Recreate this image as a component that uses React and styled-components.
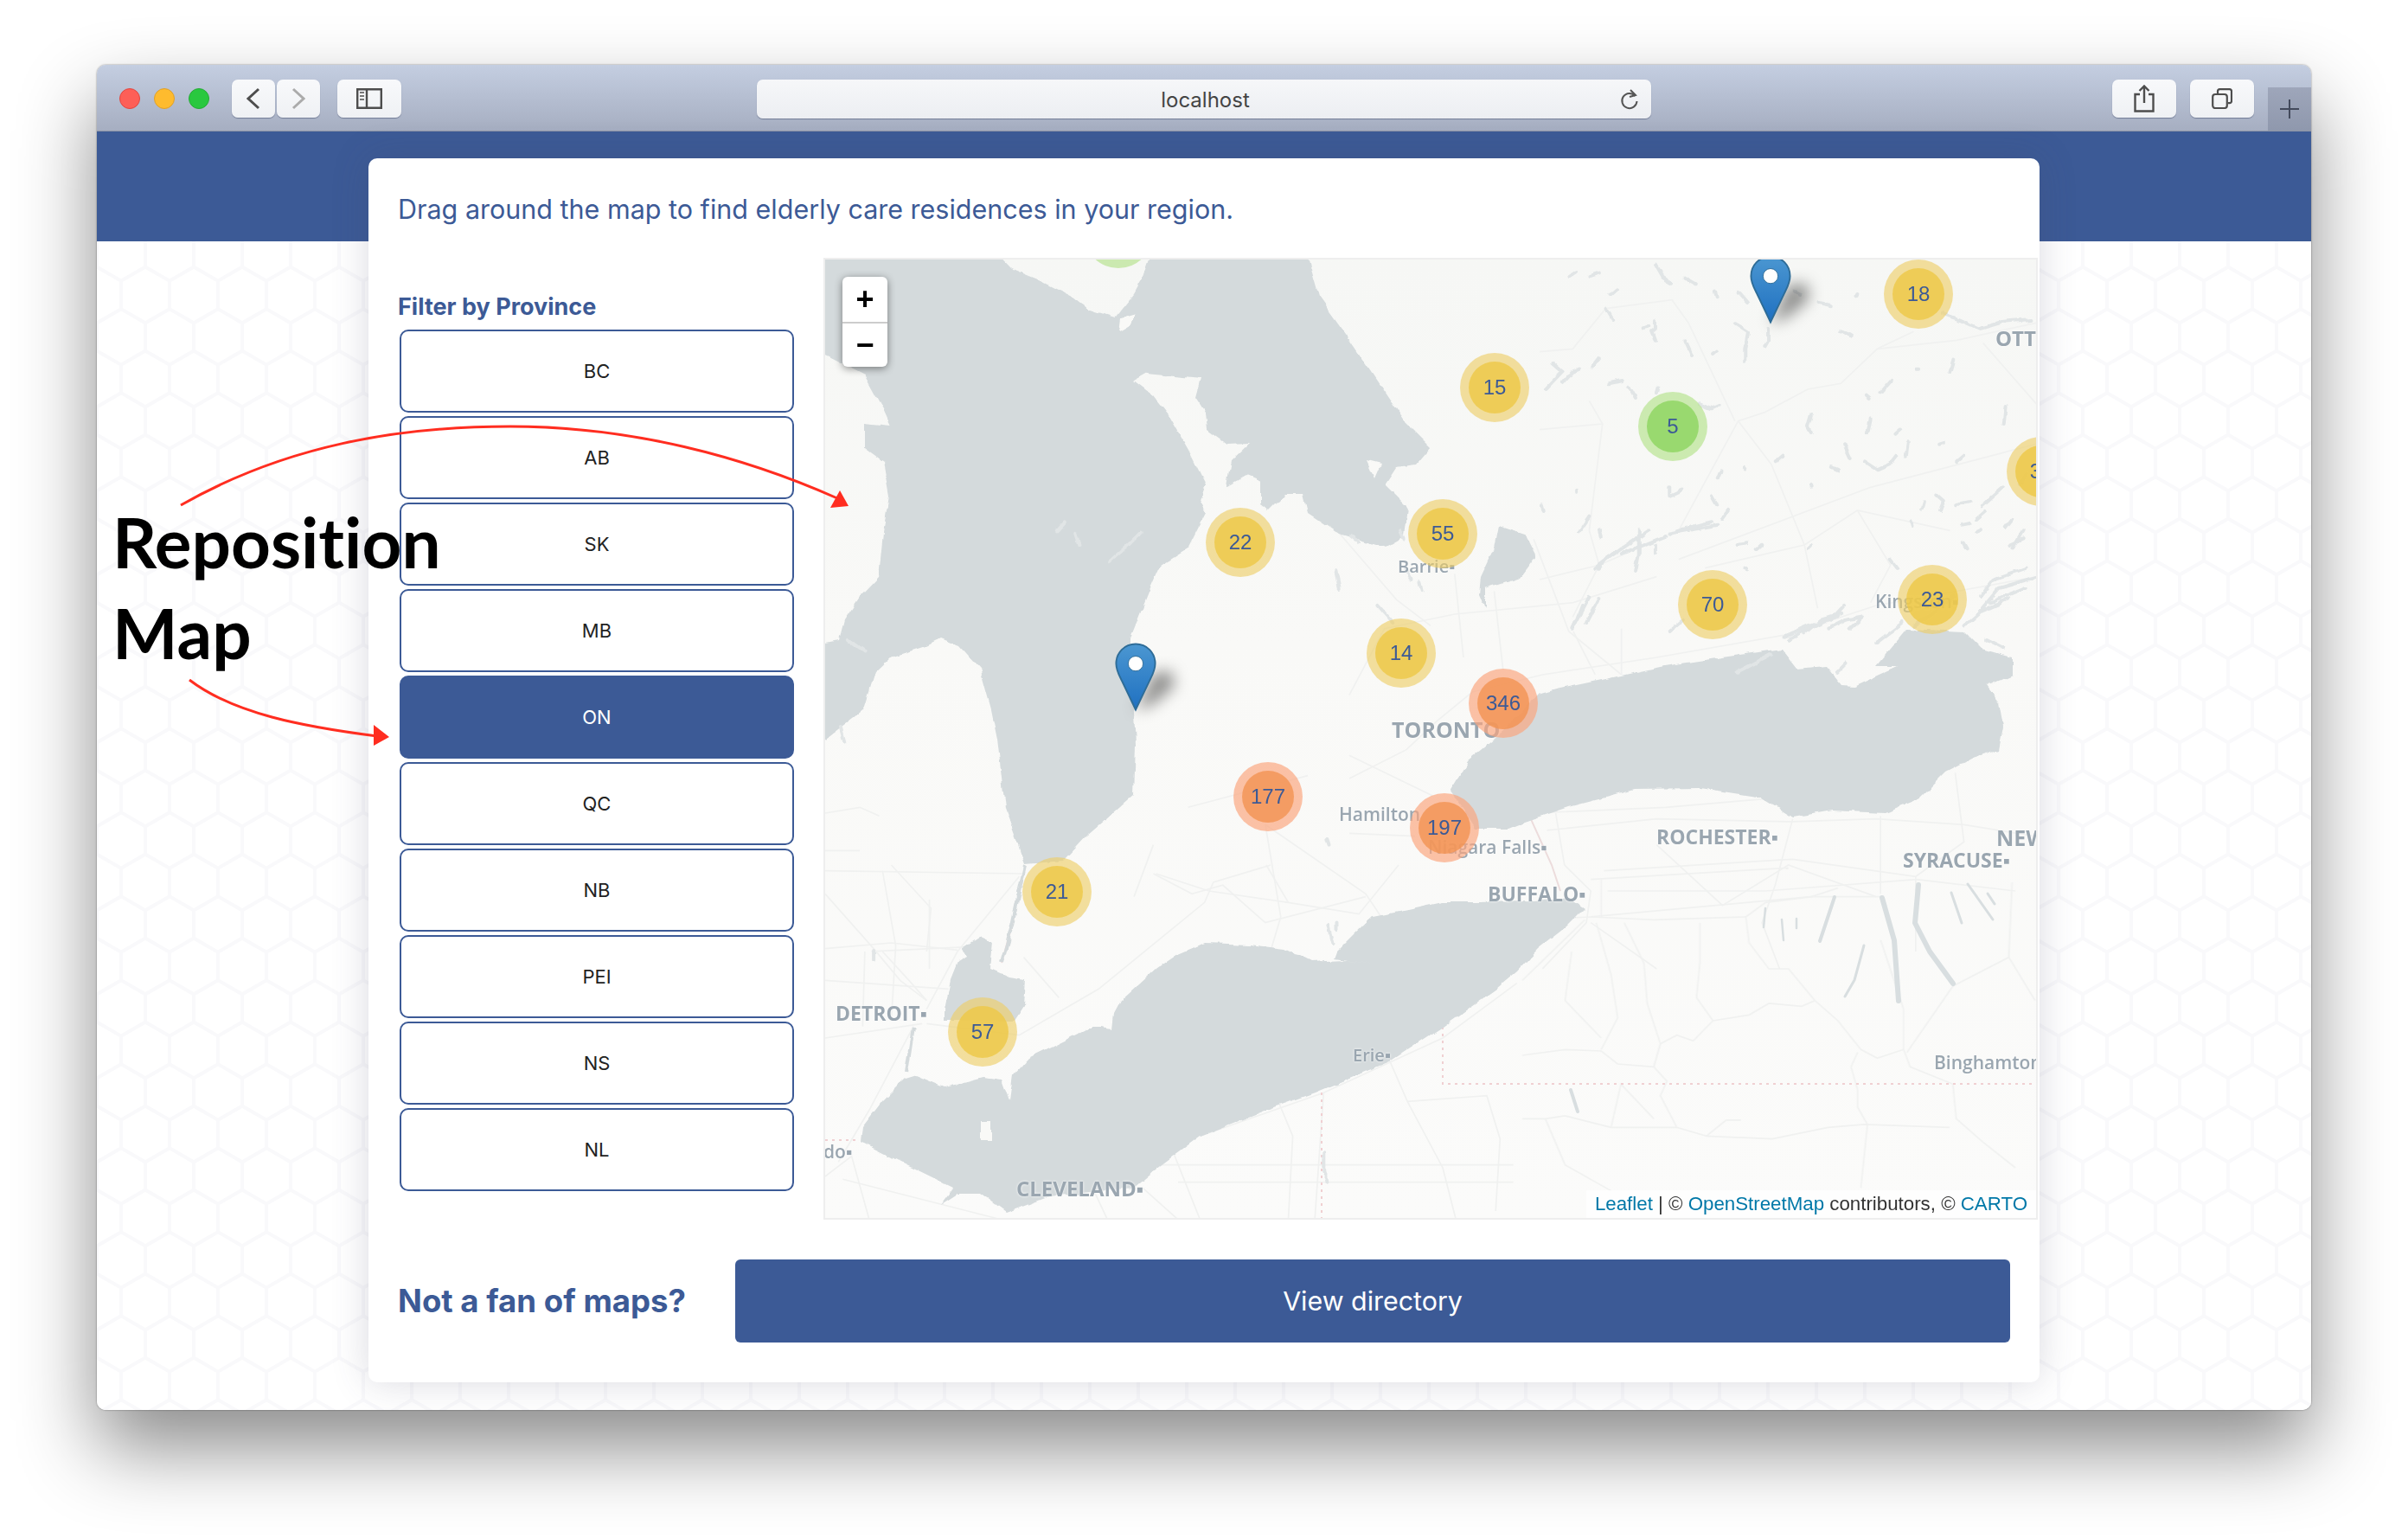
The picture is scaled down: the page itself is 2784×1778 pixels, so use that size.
import React from "react";
import styled, { createGlobalStyle } from "styled-components";

const BLUE = "#3c5a96";
const WATER = "#d4dadc";
const LAND = "#f9f9f7";
const MAP_X = 954;
const MAP_Y = 300;

const hexTile = encodeURIComponent(
  `<svg xmlns="http://www.w3.org/2000/svg" width="56" height="97"><path d="M28 0v16.2L56 32.4v32.2L28 80.8 0 64.6V32.4L28 16.2M28 80.8V97" fill="none" stroke="#f9f9fb" stroke-width="4"/></svg>`
);

const GlobalStyle = createGlobalStyle`
  html, body { margin: 0; background: #fff; }
  * { box-sizing: border-box; }
  body { font-family: Inter, "Liberation Sans", sans-serif; }
`;

const provinces = ["BC", "AB", "SK", "MB", "ON", "QC", "NB", "PEI", "NS", "NL"];

// page coordinates, the map offset is taken off when placing them
const clusters = [
  { n: "", x: 1293, y: 270, kind: "green" },
  { n: "18", x: 2218, y: 340 },
  { n: "15", x: 1728, y: 448 },
  { n: "5", x: 1934, y: 493, kind: "green" },
  { n: "31", x: 2360, y: 545 },
  { n: "22", x: 1434, y: 627 },
  { n: "55", x: 1668, y: 617 },
  { n: "70", x: 1980, y: 699 },
  { n: "23", x: 2234, y: 693 },
  { n: "14", x: 1620, y: 755 },
  { n: "346", x: 1738, y: 813, kind: "orange" },
  { n: "177", x: 1466, y: 921, kind: "orange" },
  { n: "197", x: 1670, y: 957, kind: "orange" },
  { n: "21", x: 1222, y: 1031 },
  { n: "57", x: 1136, y: 1193 },
];

const labels = [
  { t: "TORONTO", x: 1609, y: 828, s: 25, w: 700 },
  { t: "Barrie▪", x: 1616, y: 643, s: 20, w: 600 },
  { t: "Hamilton", x: 1548, y: 929, s: 21, w: 600 },
  { t: "Niagara Falls▪", x: 1651, y: 967, s: 21, w: 600 },
  { t: "BUFFALO▪", x: 1720, y: 1020, s: 23, w: 700 },
  { t: "ROCHESTER▪", x: 1915, y: 954, s: 23, w: 700 },
  { t: "SYRACUSE▪", x: 2200, y: 981, s: 23, w: 700 },
  { t: "NEW", x: 2308, y: 953, s: 25, w: 700 },
  { t: "OTTA", x: 2307, y: 377, s: 24, w: 700 },
  { t: "Kingston▪", x: 2168, y: 683, s: 21, w: 600 },
  { t: "DETROIT▪", x: 966, y: 1158, s: 23, w: 700 },
  { t: "Erie▪", x: 1564, y: 1208, s: 20, w: 600 },
  { t: "CLEVELAND▪", x: 1175, y: 1360, s: 24, w: 700 },
  { t: "Binghamton", x: 2236, y: 1216, s: 21, w: 600 },
  { t: "do▪", x: 952, y: 1319, s: 21, w: 600 },
];

// lakes, in pixels of the map box
const huron =
  "M-20 -20L185 -20 214 10 246 23 286 43 304 57 335 67 357 40 368 20 382 -20 553 -20 571 43 607 93 634 133 670 187 700 217 683 237 660 240 647 260 674 287 670 320 647 333 594 317 558 293 553 272 531 272 513 290 504 283 504 257 487 250 464 263 469 233 491 212 464 213 442 197 440 177 429 160 435 138 371 132 357 140 379 157 397 180 420 220 440 260 433 280 440 293 420 333 388 353 379 373 353 437 353 452 359 561 357 619 303 666 276 695 231 699 208 634 199 554 192 520 179 473 156 447 134 438 116 447 76 460 58 477 45 520 -20 570 -20 447 16 440 22 417 40 390 62 367 67 317 74 273 67 233 45 217 45 190 76 193 67 173 45 133 -20 100Z";
const erie =
  "M750 743L714 743 673 752 633 760 612 780 592 800 589 808 656 818 602 810 561 812 531 797 490 792 439 790 408 803 383 820 342 857 334 872 332 890 319 888 306 888 276 903 235 923 217 943 213 973 204 948 184 945 138 957 105 943 92 947 66 973 43 1003 41 1020 87 1043 128 1063 148 1073 133 1093 153 1080 179 1080 209 1102 260 1083 357 1073 388 1047 434 1013 510 983 566 963 653 927 714 887 776 843 800 823 824 797 856 772 878 750 860 738 820 742Z";
const ontario =
  "M824 503L845 497 911 483 971 470 1037 460 1106 450 1124 473 1157 470 1175 492 1190 493 1240 470 1215 470 1251 427 1317 430 1337 450 1372 460 1372 480 1342 493 1357 513 1362 540 1357 567 1327 577 1296 593 1266 623 1225 640 1164 637 1119 645 1083 623 1012 612 936 613 860 633 809 650 789 658 753 658 723 613 743 580 784 547Z";
const simcoe = "M779 307L809 317 822 343 804 367 763 380 763 403 756 387 758 367 774 333Z";
const stClair = "M179 783L194 790 191 820 214 830 232 833 230 863 219 880 138 880 138 867 145 833 153 813 163 807 158 797Z";
const islands = ["M340 84L342 68 359 63 352 77Z", "M180 996L192 996 192 1018 180 1018Z", "M627 233L643 237 636 253Z"];
const water = ["M102 887L94 940", "M204 813L216 770 231 700"];

// the rest is written in the pixels of the crop it was read from, one group each
const spaces = {
  north: "translate(826 -20) scale(.3827 .3333)",
  mid: "translate(606 300) scale(.5076 .3333)",
  west: "translate(0 300) scale(.4464 .3333)",
  south: "translate(0 700) scale(.51 .3333)",
  east: "translate(806 700) scale(.38 .3333)",
};

const roads = {
  north: [
    "M0 1170L180 1120 420 1000 600 620 680 590 810 510 910 490 1020 370 1130 310", "M600 620L700 770 800 1050 840 1270",
    "M960 930L1060 1120 1000 1250", "M420 1100L1000 850 1400 730 1500 700", "M180 1120L100 1300", "M200 230L400 200 450 280 590 620",
    "M0 380L100 370 200 230", "M150 550L190 630 0 650", "M190 630L150 1000 180 1120", "M1020 370L1260 340 1500 280",
    "M1500 560L1340 350", "M1240 1000L960 930 800 1050 500 1130",
  ],
  mid: [
    "M0 900L130 800 200 700 280 600 440 540 700 480 1000 400 1200 300 1568 200", "M240 190L260 480", "M330 250L350 520",
    "M420 70L500 390 620 540", "M0 610L80 380 240 330 510 290 700 200", "M510 390L560 540", "M620 380L620 540", "M190 960L0 820",
    "M0 1090L150 1100", "M420 1020L720 1000 950 970", "M450 1080L700 1040 1010 1050 1200 1040 1400 1060 1560 1100",
    "M580 1220L1010 1180 1290 1240 1400 1120 1380 880", "M1210 1030L1210 1300", "M700 1130L850 1340 1000 1200 1200 1310",
    "M470 1020L490 1200 550 1290 540 1400 440 1560", "M550 1250L1000 1210", "M550 1380L1050 1310 1210 1310", "M1010 1040L970 1270 940 1400 980 1560",
    "M1290 1240L1290 1500", "M550 1400L700 1560",
  ],
  west: [
    "M850 1230L950 1300 1030 1270 1140 1400 1400 1310", "M1140 1060L1180 1380 1140 1560", "M1140 1060L1400 1300 1500 1500", "M940 1000L1250 890",
    "M850 1130L800 1310", "M120 1500L430 1480", "M270 1320V1560", "M0 1150L90 1150", "M0 1020L90 1000 140 1030", "M0 550L100 550", "M100 430L90 560",
    "M1300 0L1480 280 1568 370",
  ],
  south: [
    "M0 290L150 270 300 295", "M150 0L240 150 230 300", "M0 100L110 290 170 400 230 470", "M0 400L280 430", "M90 300L85 560", "M130 20L160 280 150 540",
    "M440 40L300 300 230 500", "M200 560L100 850 30 1030", "M220 550L0 600", "M230 550L440 590 620 430 860 130 880 60 1010 0", "M0 20L450 30",
    "M870 90L1050 130 1210 170 1300 0", "M450 320L530 460", "M750 30L870 90", "M1050 130L1000 0", "M1130 790L1110 1230", "M1030 830L1060 940 1050 1230",
    "M760 1040L1560 1040", "M800 1100L1560 1100", "M850 940L1130 790 1400 600 1568 410", "M1280 680L1320 820 1400 1050 1430 1230",
    "M1320 820L1500 800 1530 950 1520 1200", "M0 1080L60 1010 100 1230", "M40 1090L400 1230", "M720 1120L800 1230", "M790 1000L850 1230",
    "M600 1100L640 1230", "M230 470L190 400 130 300",
  ],
  east: [
    "M0 660L130 640 240 645 290 690 400 700 440 750 420 800 470 910 560 940 620 885 665 885",
    "M400 700L420 620 470 590 520 610 580 540 690 520 750 480 850 490 890 470 960 540 1030 640 1080 670 1160 640 1180 700 1310 760 1320 880 1400 960 1500 1050",
    "M890 470L810 360 750 360 690 270 680 180 740 130 880 110 960 80", "M580 540L530 460 540 340 540 200", "M225 200L270 380 290 530 240 640",
    "M310 200L370 340 380 480 420 620 400 700", "M150 300L130 470 240 600", "M0 880L70 880 130 870 270 910 470 910", "M70 880L130 1040 270 1130",
    "M270 910L300 760 400 880", "M1020 780L1020 840 1050 900 1030 1120", "M560 940L760 950 930 910 1040 900 1300 910", "M1020 650L1000 700 1020 780",
    "M1160 640L1160 500 1090 260", "M1170 650L1310 420 1480 320 1560 470", "M1480 320L1490 60", "M0 190L210 180 400 190 680 180", "M260 90L740 90 1200 50 1500 90",
    "M240 50V180", "M0 400L190 190",
  ],
};

const ponds = {
  north: [
    "M350 80l20 40 30 20", "M230 160l-20 20", "M90 120l20-15", "M150 120l30-10", "M440 125l30 20", "M530 170l5 20", "M600 170l30 40", "M770 170l20 10",
    "M840 210l40 10", "M960 180l-5 10", "M200 230l20 40", "M590 280l40 30-10 60 0 40", "M690 300l0 40-10 20", "M910 310l30 20", "M350 270l0 30-10 10 10 30",
    "M310 295l20-5", "M120 440l-20 10-30 40", "M180 400l-20 30", "M40 420l30 30-50 60", "M1140 440l10 0", "M1250 410l-10 40", "M1060 480l-30 40",
    "M990 530l10 10", "M530 380l-10 10", "M440 340l20 50", "M210 490l40-10", "M270 500l20 40", "M360 500l-5 20", "M480 560l40 20 20-10", "M820 600l-10 40 10 20",
    "M1000 610l-10 50", "M1090 650l-15 15", "M1220 690l-15 5", "M1410 570l-5 60", "M920 700l20 50", "M730 740l-20 20", "M1110 700l-5 40",
    "M980 760l40 30 40-20 20-30", "M1280 740l-20 20", "M550 790l-10 30", "M620 780l5 5", "M880 780l20 10", "M820 840l5 5", "M390 850l0 30 40-20", "M520 880l15 30",
    "M110 860l0 10", "M570 930l-20 30", "M150 950l-30 50", "M180 1000l5 20", "M10 910l5 20", "M330 1000l-130 100-20 30", "M300 1000l0 80-10 60", "M420 1000l100-30",
    "M350 1050l0 30", "M600 1050l30-5", "M670 1050l-15 15", "M820 1050l-10 10", "M1200 880l20 20-10 30", "M1300 900l-40 10", "M1160 900l-5 20", "M1400 850l-60 60",
    "M1470 800l-20 40", "M1430 960l-20 30", "M1280 980l20-5", "M1350 930l-30 30", "M1120 970l5 20", "M1330 1000l-10 5", "M1060 1100l20 30", "M620 1130l10 5",
    "M150 1230l-50 110", "M880 1310l40-50", "M1130 1330l60-40 60-60", "M800 1360l50-50 60-20", "M750 1380l100-60", "M1330 1230l40-60 100-40", "M1420 1050l40-20",
    "M1280 1040l10 20", "M1460 1000l-30 60", "M700 1430l-100 60", "M1220 250l50 20 60 30 60-20 90-10",
  ],
  mid: [
    "M1568 200L1480 240 1430 330 1400 370", "M1540 240l-80 50", "M530 300l-20 80", "M570 270l-30 90", "M730 390l30-40", "M990 410l60-40 60-30", "M1090 380l40-30 40-10-30 40",
    "M1200 430l60-70", "M620 100l-60 70", "M720 60l-100 60", "M840 20l-110 30", "M1500 280l-60 40", "M1450 420l40 30", "M1130 500l-20 30",
  ],
  west: [
    "M735 150l50-60 30-40", "M650 50l10 40", "M620 10l-20 30", "M40 720l10 50", "M60 420l40 40", "M1320 180l10 60", "M1430 300l40 60", "M1500 170l20 40", "M1540 220l5 30",
    "M1490 40l10 30", "M1360 60l20 20", "M1300 1110l5 20", "M1325 1400l0 20",
  ],
  south: ["M110 300l0 30", "M1130 1000l0 60 10 40", "M1140 210l10 60"],
};

const fingers = [
  { d: "M1222 738L1236 787 1241 857", w: 6 },
  { d: "M1264 723L1260 767 1277 800 1304 837", w: 6 },
  { d: "M1201 793L1190 833 1179 852", w: 3 },
  { d: "M1167 737L1150 788", w: 4 },
  { d: "M1087 750L1085 772", w: 2.5 },
  { d: "M1106 763L1108 787", w: 2.5 },
  { d: "M1123 762L1123 773", w: 2.5 },
  { d: "M1302 732L1314 767", w: 3 },
  { d: "M1321 722L1350 763", w: 3 },
  { d: "M1344 733L1352 745", w: 3 },
  { d: "M862 960L870 985", w: 4 },
];

const Page = styled.div`
  position: relative;
  width: 2784px;
  height: 1778px;
  padding: 75px 112px 148px;
  background: #fff;
  overflow: hidden;
`;

const Browser = styled.div`
  display: flex;
  flex-direction: column;
  height: 1555px;
  border-radius: 10px;
  overflow: hidden;
`;

const BrowserShadow = styled.div`
  border-radius: 10px;
  box-shadow: 0 44px 90px rgba(0, 0, 0, 0.46), 0 0 2px rgba(0, 0, 0, 0.5);
`;

const TitleBar = styled.div`
  display: flex;
  align-items: flex-start;
  height: 77px;
  padding: 17px 0 0 26px;
  background: linear-gradient(#c4cee1, #a6aec1);
  border-bottom: 1px solid #8e95a6;
`;

const Lights = styled.div`
  display: flex;
  gap: 16px;
  margin: 10px 26px 0 0;
`;

const Light = styled.span`
  width: 24px;
  height: 24px;
  border-radius: 50%;
  background: ${(p) => p.$color};
  border: 1px solid ${(p) => p.$edge};
`;

const ToolButton = styled.div`
  display: flex;
  align-items: center;
  justify-content: center;
  width: ${(p) => p.$w}px;
  height: 44px;
  margin-left: ${(p) => p.$ml || 0}px;
  border-radius: 7px;
  background: linear-gradient(#f8f9fb, #eff1f4);
  box-shadow: 0 1px 1px rgba(70, 80, 110, 0.55);
`;

const AddressBar = styled.div`
  position: relative;
  display: flex;
  align-items: center;
  justify-content: center;
  width: 1034px;
  height: 45px;
  margin-left: 411px;
  padding: 2px 0 0 3px;
  border-radius: 7px;
  background: linear-gradient(#f6f7f9, #eceef2);
  box-shadow: 0 1px 1px rgba(70, 80, 110, 0.55);
  font-size: 24px;
  color: #444;
`;

const Reload = styled.svg`
  position: absolute;
  right: 12px;
  top: 10px;
`;

const NewTab = styled.div`
  display: flex;
  align-items: center;
  justify-content: center;
  align-self: flex-end;
  width: 50px;
  height: 50px;
  margin-left: 16px;
  background: linear-gradient(#9ea6ba, #8f98ad);
`;

const Content = styled.div`
  flex: 1;
  padding-top: 31px;
  background:
    linear-gradient(${BLUE}, ${BLUE}) top / 100% 127px no-repeat,
    url("data:image/svg+xml,${hexTile}") 0 -5px / 56px 97px,
    #fff;
`;

const Card = styled.div`
  width: 1932px;
  height: 1415px;
  margin-left: 314px;
  border-radius: 10px;
  background: #fff;
  box-shadow: 0 0 44px rgba(70, 70, 100, 0.2);
`;

const Intro = styled.p`
  height: 115px;
  margin: 0;
  padding: 40px 0 0 34px;
  font-size: 30.5px;
  line-height: 38px;
  color: ${BLUE};
`;

const MainRow = styled.div`
  display: flex;
  height: 1112px;
  padding-right: 2px;
`;

const Sidebar = styled.div`
  display: flex;
  flex-direction: column;
  width: 526px;
  padding: 39px 0 0 34px;
`;

const FilterLabel = styled.div`
  height: 44px;
  font-size: 27px;
  font-weight: 700;
  line-height: 36px;
  color: ${BLUE};
`;

const ProvinceList = styled.div`
  display: flex;
  flex-direction: column;
  gap: 4px;
  padding-left: 2px;
`;

const ProvinceButton = styled.button`
  width: 456px;
  height: 96px;
  border: 2px solid ${BLUE};
  border-radius: 10px;
  background: ${(p) => (p.$active ? BLUE : "#fff")};
  color: ${(p) => (p.$active ? "#fff" : "#222")};
  font-family: inherit;
  font-size: 22px;
`;

const MapBox = styled.div`
  position: relative;
  flex: 1;
  overflow: hidden;
  border: 2px solid #eeeeee;
  background: linear-gradient(#f6f7f5, ${LAND} 40%, #fbfbfa);
`;

const MapArt = styled.svg`
  display: block;
  path {
    vector-effect: non-scaling-stroke;
  }
`;

const MapLabel = styled.span`
  position: absolute;
  left: ${(p) => p.$x - MAP_X}px;
  top: ${(p) => p.$y - MAP_Y}px;
  font-family: "Open Sans", sans-serif;
  font-size: ${(p) => p.$s}px;
  font-weight: ${(p) => p.$w};
  line-height: 1.2;
  white-space: nowrap;
  color: #9aa6b0;
  text-shadow: 0 0 3px #fff;
`;

const clusterColors = {
  yellow: ["rgba(238, 205, 100, 0.62)", "rgba(238, 200, 70, 0.8)"],
  green: ["rgba(181, 226, 140, 0.66)", "rgba(140, 212, 95, 0.8)"],
  orange: ["rgba(250, 165, 125, 0.68)", "rgba(243, 148, 82, 0.8)"],
};

const ClusterRing = styled.div`
  position: absolute;
  left: ${(p) => p.$x - MAP_X - 40}px;
  top: ${(p) => p.$y - MAP_Y - 40}px;
  display: flex;
  align-items: center;
  justify-content: center;
  width: 80px;
  height: 80px;
  border-radius: 50%;
  background: ${(p) => clusterColors[p.$kind][0]};
`;

const ClusterCore = styled.div`
  width: 60px;
  height: 60px;
  border-radius: 50%;
  background: ${(p) => clusterColors[p.$kind][1]};
  font-family: "Liberation Sans", Arial, sans-serif;
  font-size: 24px;
  line-height: 60px;
  text-align: center;
  color: ${BLUE};
`;

const PinIcon = styled.svg`
  position: absolute;
  left: ${(p) => p.$x - MAP_X - 24}px;
  top: ${(p) => p.$y - MAP_Y - 79}px;
  overflow: visible;
`;

const ZoomControl = styled.div`
  position: absolute;
  left: 20px;
  top: 20px;
  width: 52px;
  border-radius: 6px;
  background: #fff;
  box-shadow: 0 2px 10px rgba(0, 0, 0, 0.45);
`;

const ZoomKey = styled.div`
  display: flex;
  align-items: center;
  justify-content: center;
  height: 52px;
  font-family: "Liberation Sans", Arial, sans-serif;
  font-size: 36px;
  font-weight: 700;
  color: #000;
  & + & {
    border-top: 2px solid #ccc;
  }
`;

const Attribution = styled.div`
  position: absolute;
  right: 0;
  bottom: 0;
  height: 32px;
  padding: 0 10px;
  background: rgba(255, 255, 255, 0.7);
  font-family: "Liberation Sans", Arial, sans-serif;
  font-size: 22.3px;
  line-height: 32px;
  color: #333;
  white-space: nowrap;
  a {
    color: #0078a8;
    text-decoration: none;
  }
`;

const Footer = styled.div`
  display: flex;
  align-items: center;
  gap: 57px;
  padding: 46px 34px 45px 34px;
`;

const FooterText = styled.div`
  font-size: 36.6px;
  font-weight: 700;
  white-space: nowrap;
  color: ${BLUE};
`;

const DirectoryButton = styled.button`
  flex: 1;
  height: 96px;
  border: 0;
  border-radius: 6px;
  background: ${BLUE};
  color: #fff;
  font-family: inherit;
  font-size: 30.4px;
`;

const Note = styled.div`
  position: absolute;
  left: 130px;
  top: ${(p) => p.$top}px;
  font-family: Lato, sans-serif;
  font-size: 80px;
  font-weight: 700;
  font-variant-ligatures: none;
  line-height: 100px;
  color: #000;
`;

const Arrows = styled.svg`
  position: absolute;
  left: 0;
  top: 0;
  pointer-events: none;
`;

function MapDrawing() {
  return (
    <MapArt width="1400" height="1108" viewBox="0 0 1400 1108">
      <defs>
        <filter id="shore" filterUnits="userSpaceOnUse" x="-40" y="-40" width="1480" height="1190">
          <feTurbulence type="fractalNoise" baseFrequency="0.05" numOctaves="3" seed="4" />
          <feDisplacementMap in="SourceGraphic" scale="7" xChannelSelector="R" yChannelSelector="G" />
          <feGaussianBlur stdDeviation="0.5" />
        </filter>
        <filter id="soft" filterUnits="userSpaceOnUse" x="-40" y="-40" width="1480" height="1190">
          <feGaussianBlur stdDeviation="0.6" />
        </filter>
      </defs>
      <g fill="none" stroke="#f0f1f0" strokeWidth="1.7" filter="url(#soft)">
        {Object.keys(roads).map((space) => (
          <g key={space} transform={spaces[space]}>
            {roads[space].map((d) => (
              <path key={d} d={d} />
            ))}
          </g>
        ))}
      </g>
      <path d="M714 887V953H1400M574 963V1108M0 1018H38" fill="none" stroke="#f0d0d2" strokeWidth="2" strokeDasharray="3 5" />
      <path d="M204 813L216 770 219 757M806 625L840 700 850 730" fill="none" stroke="#ecdcdc" strokeWidth="2" />
      <g filter="url(#shore)">
        <g fill={WATER}>
          <path d={huron} />
          <path d={ontario} />
          <path d={erie} />
          <path d={simcoe} />
          <path d={stClair} />
        </g>
        <g fill="none" stroke={WATER} strokeWidth="4">
          {water.map((d) => (
            <path key={d} d={d} />
          ))}
        </g>
        <g fill="none" stroke="#e1e5e6" strokeWidth="4" strokeLinecap="round" strokeLinejoin="round">
          {Object.keys(ponds).map((space) => (
            <g key={space} transform={spaces[space]}>
              {ponds[space].map((d) => (
                <path key={d} d={d} />
              ))}
            </g>
          ))}
        </g>
        <g fill={LAND}>
          {islands.map((d) => (
            <path key={d} d={d} />
          ))}
        </g>
      </g>
      <g fill="none" stroke="#d8dee0" strokeLinecap="round" strokeLinejoin="round" filter="url(#soft)">
        {fingers.map((f) => (
          <path key={f.d} d={f.d} strokeWidth={f.w} />
        ))}
      </g>
    </MapArt>
  );
}

function Pin({ x, y }) {
  return (
    <PinIcon $x={x} $y={y} width="48" height="79" viewBox="0 0 50 82">
      <defs>
        <linearGradient id={`pin${x}`} x1="0" y1="0" x2="0" y2="1">
          <stop offset="0" stopColor="#4b97d1" />
          <stop offset="1" stopColor="#1f70c1" />
        </linearGradient>
        <filter id={`blur${x}`} filterUnits="userSpaceOnUse" x="-10" y="-10" width="130" height="110">
          <feGaussianBlur stdDeviation="9" />
        </filter>
      </defs>
      <path d="M25 82L40 50 46 36 68 34 72 52 46 74Z" fill="rgba(0,0,0,0.42)" filter={`url(#blur${x})`} />
      <path
        d="M25 1.5C11.5 1.5 1.5 12 1.5 25C1.5 33 5 39 8.5 46L25 80.5L41.5 46C45 39 48.5 33 48.5 25C48.5 12 38.5 1.5 25 1.5Z"
        fill={`url(#pin${x})`}
        stroke="#2e6c97"
        strokeWidth="2"
      />
      <circle cx="25" cy="25" r="9" fill="#fff" stroke="#2e6c97" strokeWidth="1" />
    </PinIcon>
  );
}

function App() {
  return (
    <Page>
      <GlobalStyle />
      <BrowserShadow>
        <Browser>
          <TitleBar>
            <Lights>
              <Light $color="#fd5f57" $edge="#e2463f" />
              <Light $color="#febb2e" $edge="#e0a028" />
              <Light $color="#29c83f" $edge="#24ab34" />
            </Lights>
            <ToolButton $w={50}>
              <svg width="18" height="26" viewBox="0 0 18 26">
                <path d="M15 2L3 13l12 11" fill="none" stroke="#4d4d4d" strokeWidth="3" />
              </svg>
            </ToolButton>
            <ToolButton $w={50} $ml={2}>
              <svg width="18" height="26" viewBox="0 0 18 26">
                <path d="M3 2l12 11L3 24" fill="none" stroke="#ababab" strokeWidth="3" />
              </svg>
            </ToolButton>
            <ToolButton $w={74} $ml={20}>
              <svg width="30" height="24" viewBox="0 0 30 24">
                <path d="M1.2 1.2h27.6v21.6H1.2zM12 1.2v21.6" fill="none" stroke="#4d4d4d" strokeWidth="2.4" />
                <path d="M4 5h5M4 9h5M4 13h5" stroke="#777" strokeWidth="2" />
              </svg>
            </ToolButton>
            <AddressBar>
              localhost
              <Reload width="26" height="26" viewBox="0 0 26 26">
                <path d="M19.5 9A8.6 8.6 0 1 0 21.5 15" fill="none" stroke="#555" strokeWidth="2" />
                <path d="M14 2l6 6-7 2" fill="none" stroke="#555" strokeWidth="2" />
              </Reload>
            </AddressBar>
            <ToolButton $w={74} $ml={533}>
              <svg width="24" height="32" viewBox="0 0 24 32">
                <path d="M7 11H1.5v19.5h21V11H17M12 21V2M6.5 7L12 1.5 17.5 7" fill="none" stroke="#4d4d4d" strokeWidth="2.4" />
              </svg>
            </ToolButton>
            <ToolButton $w={74} $ml={16}>
              <svg width="24" height="24" viewBox="0 0 24 24">
                <path d="M7 6V3.5A2.2 2.2 0 0 1 9.2 1.2h11.6A2.2 2.2 0 0 1 23 3.5V15a2.2 2.2 0 0 1-2.2 2.2H19" fill="none" stroke="#4d4d4d" strokeWidth="2.2" />
                <rect x="1.2" y="7" width="16.6" height="16" rx="3" fill="none" stroke="#4d4d4d" strokeWidth="2.2" />
              </svg>
            </ToolButton>
            <NewTab>
              <svg width="24" height="24" viewBox="0 0 24 24">
                <path d="M12 1v22M1 12h22" stroke="#434a5c" strokeWidth="2" />
              </svg>
            </NewTab>
          </TitleBar>
          <Content>
            <Card>
              <Intro>Drag around the map to find elderly care residences in your region.</Intro>
              <MainRow>
                <Sidebar>
                  <FilterLabel>Filter by Province</FilterLabel>
                  <ProvinceList>
                    {provinces.map((p) => (
                      <ProvinceButton key={p} $active={p === "ON"}>
                        {p}
                      </ProvinceButton>
                    ))}
                  </ProvinceList>
                </Sidebar>
                <MapBox>
                  <MapDrawing />
                  {labels.map((l) => (
                    <MapLabel key={l.t} $x={l.x} $y={l.y} $s={l.s} $w={l.w}>
                      {l.t}
                    </MapLabel>
                  ))}
                  {clusters.map((c) => (
                    <ClusterRing key={c.x} $x={c.x} $y={c.y} $kind={c.kind || "yellow"}>
                      <ClusterCore $kind={c.kind || "yellow"}>{c.n}</ClusterCore>
                    </ClusterRing>
                  ))}
                  <Pin x={1313} y={822} />
                  <Pin x={2047} y={374} />
                  <ZoomControl>
                    <ZoomKey>+</ZoomKey>
                    <ZoomKey>−</ZoomKey>
                  </ZoomControl>
                  <Attribution>
                    <a href="#leaflet">Leaflet</a> | © <a href="#osm">OpenStreetMap</a> contributors, © <a href="#carto">CARTO</a>
                  </Attribution>
                </MapBox>
              </MainRow>
              <Footer>
                <FooterText>Not a fan of maps?</FooterText>
                <DirectoryButton>View directory</DirectoryButton>
              </Footer>
            </Card>
          </Content>
        </Browser>
      </BrowserShadow>
      <Note $top={576}>Reposition</Note>
      <Note $top={681}>Map</Note>
      <Arrows width="2784" height="1778" viewBox="0 0 2784 1778">
        <path d="M209 584C330 515 460 493 590 493C730 493 860 528 968 576" fill="none" stroke="#ff2d20" strokeWidth="3" />
        <path d="M971 567L960 587 981 585Z" fill="#ff2d20" />
        <path d="M219 786C270 825 350 840 436 851" fill="none" stroke="#ff2d20" strokeWidth="3" />
        <path d="M432 838L432 862 450 852Z" fill="#ff2d20" />
      </Arrows>
    </Page>
  );
}

export default App;
